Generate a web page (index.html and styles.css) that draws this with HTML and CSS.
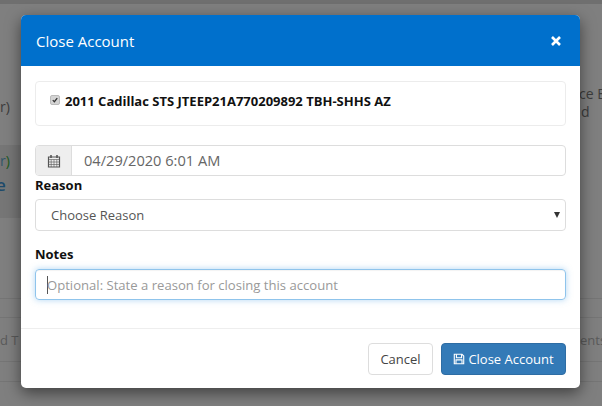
FILE: index.html
```html
<!DOCTYPE html>
<html lang="en">
<head>
<meta charset="utf-8">
<title>Close Account</title>
<link rel="stylesheet" href="styles.css">
</head>
<body>
<div class="page">
  <div class="topbar"></div>
  <div class="frag frag-r1">r)</div>
  <div class="panel"></div>
  <div class="frag frag-r2">r<span class="green">)</span></div>
  <div class="frag frag-e">e</div>
  <div class="frag frag-ce">ce E</div>
  <div class="frag frag-d">d</div>
  <div class="table-row"><span class="cell-l">d T</span><span class="cell-r">ents</span></div>
  <div class="table-row2"></div>
</div>
<div class="modal">
  <header class="modal-header">
    <h1 class="modal-title">Close Account</h1>
    <svg class="close-x" viewBox="0 0 12 12" aria-label="Close"><path d="M2 2l8 8M10 2l-8 8"/></svg>
  </header>
  <div class="modal-body">
    <div class="vehicle-card">
      <div class="vehicle">
        <span class="check"><svg viewBox="0 0 10 10"><path d="M2.2 5.2l2 2 3.6-4.6"/></svg></span>
        <span>2011 Cadillac STS JTEEP21A770209892 TBH-SHHS AZ</span>
      </div>
    </div>
    <div class="date-group">
      <span class="addon">
        <svg class="cal" viewBox="0 0 14 14"><path d="M1.5 3h11v10h-11z"/><path d="M1.5 5.5h11M1.5 8h11M1.5 10.5h11M4.2 5.5V13M7 5.5V13M9.8 5.5V13" class="thin"/><path d="M4 1v3M10 1v3" class="pin"/></svg>
      </span>
      <span class="date-value">04/29/2020 6:01 AM</span>
    </div>
    <div class="label">Reason</div>
    <div class="select"><span>Choose Reason</span><span class="caret"></span></div>
    <div class="label notes">Notes</div>
    <div class="notes-input"><span class="cursor"></span><span>Optional: State a reason for closing this account</span></div>
  </div>
  <footer class="modal-footer">
    <button class="btn btn-cancel" type="button">Cancel</button>
    <button class="btn btn-primary" type="button">
      <svg class="save" viewBox="0 0 14 14"><path d="M1.5 1.5h9l2 2v9h-11z"/><path d="M4 1.5v4h6v-4M3.5 12.5V8h7v4.5"/></svg>Close Account
    </button>
  </footer>
</div>
</body>
</html>
```
FILE: styles.css
```css
* { box-sizing: border-box; }
html, body { margin: 0; height: 100%; }
body {
  position: relative;
  width: 602px;
  height: 406px;
  overflow: hidden;
  background: #7f7f7f;
  font-family: "Open Sans", "Liberation Sans", sans-serif;
  font-size: 13px;
  color: #333;
}
.page { position: absolute; inset: 0; overflow: hidden; }
.topbar { height: 4px; background: #6f6f6f; }
.frag { position: absolute; color: #3c3c3c; font-size: 14px; line-height: 18px; white-space: nowrap; }
.frag-r1 { left: 0; top: 98px; }
.panel { position: absolute; left: 0; top: 145px; width: 21px; height: 73px; background: #767676; }
.frag-r2 { left: 0; top: 152px; color: #2f5566; }
.green { color: #1c5a1c; }
.frag-e { left: -4px; top: 176px; color: #1d4a6b; font-size: 17px; font-weight: 600; }
.frag-ce { left: 579px; top: 85px; }
.frag-d { left: 581px; top: 103px; }
.table-row {
  position: absolute; left: 0; right: 0; top: 298px; height: 63px;
  border-top: 1px solid #757575;
}
.table-row::before { content: ""; position: absolute; left: 0; right: 0; top: 18px; border-top: 1px solid #757575; }
.cell-l, .cell-r { position: absolute; top: 32px; color: #5a5a5a; font-size: 13px; line-height: 18px; white-space: nowrap; }
.cell-l { left: 0; }
.cell-r { left: 580px; }
.table-row2 { position: absolute; left: 0; right: 0; top: 361px; height: 21px; border-top: 1px solid #757575; border-bottom: 1px solid #757575; }

.modal {
  position: absolute;
  left: 21px; top: 15px;
  width: 559px; height: 373px;
  display: flex; flex-direction: column;
  background: #fff;
  border-radius: 5px;
  overflow: hidden;
  box-shadow: 0 5px 15px rgba(0,0,0,.5);
}
.modal-header {
  flex: none; height: 51px;
  display: flex; align-items: center; justify-content: space-between;
  padding: 0 18px 0 15px;
  background: #0070cc;
}
.modal-title { margin: 0; font-size: 15px; font-weight: 400; color: #fff; line-height: 20px; }
.close-x { width: 12px; height: 12px; fill: none; stroke: #fff; stroke-width: 2.6; }
.modal-body { flex: 1; padding: 15px 14px 0; }
.vehicle-card {
  height: 45px; padding: 9px 14px;
  border: 1px solid #ececec; border-radius: 4px;
}
.vehicle { display: flex; align-items: center; gap: 5px; font-size: 13px; font-weight: 700; color: #111; line-height: 20px; }
.check { flex: none; width: 10px; height: 10px; margin-top: -2px; background: #d4d4d4; border: 1px solid #bbb; border-radius: 2px; display: flex; }
.check svg { width: 8px; height: 8px; fill: none; stroke: #333; stroke-width: 1.6; }
.date-group {
  margin-top: 19px; height: 31px; display: flex;
  border: 1px solid #ddd; border-radius: 4px; overflow: hidden;
}
.addon { flex: none; width: 36px; display: flex; align-items: center; justify-content: center; background: #eee; border-right: 1px solid #ddd; }
.cal { width: 14px; height: 14px; stroke: #555; stroke-width: 1.2; fill: none; }
.thin { stroke-width: .6; }
.pin { stroke-width: 1.6; }
.date-value { padding-left: 12px; line-height: 29px; font-size: 14.6px; color: #666; }
.label { font-size: 13px; font-weight: 700; color: #111; line-height: 18px; }
.select {
  height: 32px; margin-top: 5px; padding: 0 5px 0 15px;
  display: flex; align-items: center; justify-content: space-between;
  border: 1px solid #ddd; border-radius: 4px;
  font-size: 13px; color: #555;
}
.caret { width: 0; height: 0; border-left: 3px solid transparent; border-right: 3px solid transparent; border-top: 6px solid #333; }
.notes { margin-top: 14px; }
.notes-input {
  height: 31px; margin-top: 6px; padding-left: 11px;
  display: flex; align-items: center;
  border: 1px solid #8fc4ec; border-radius: 4px;
  box-shadow: inset 0 1px 1px rgba(0,0,0,.05), 0 0 6px rgba(102,175,233,.5);
  font-size: 13.1px; color: #999;
}
.cursor { width: 1px; height: 18px; background: #555; margin-right: -1px; }
.modal-footer {
  flex: none; height: 60px; padding: 14px 14px 0 0;
  display: flex; justify-content: flex-end; gap: 8px;
  border-top: 1px solid #eee;
}
.btn { height: 32px; border-radius: 4px; font-family: inherit; font-size: 13px; line-height: 20px; padding: 0; display: flex; align-items: center; justify-content: center; }
.btn-cancel { width: 65px; background: #fff; border: 1px solid #ddd; color: #444; }
.btn-primary { width: 125px; background: #337ab7; border: 1px solid #2e6da4; color: #fff; gap: 3px; }
.save { width: 12px; height: 12px; fill: none; stroke: #fff; stroke-width: 1.3; }
```
